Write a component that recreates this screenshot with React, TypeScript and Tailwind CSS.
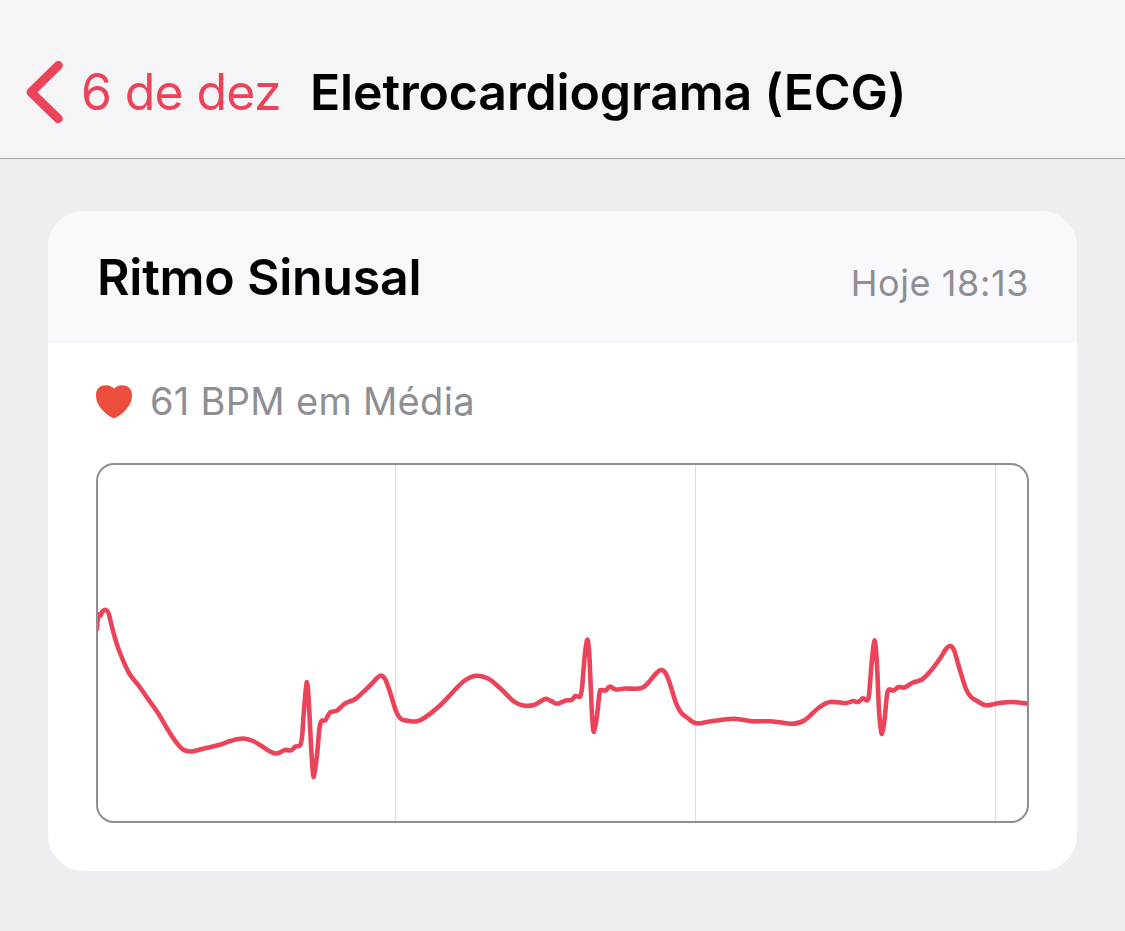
type Point = [number, number];

const GRID_LINES = [395, 695, 995];

const TRACE: Point[] = [
  [97, 629], [97.5, 621], [98.5, 614.5], [100.5, 615.5], [102.5, 611.5], [106, 610], [108.5, 613],
  [111, 623], [115, 638], [120, 653], [129, 673], [139, 686], [148, 699], [158, 713],
  [168, 730], [176, 742], [183, 749.5], [191, 751.5], [204, 748.5], [219, 745], [232, 740.5], [243, 738.5],
  [253, 741], [263, 747], [271, 752], [277, 753.5], [285, 750], [291, 750.3], [295.5, 746.5], [300, 745.5], [302, 737], [304, 710], [306.3, 685], [307.5, 685],
  [309, 705], [311, 745], [313, 774], [314.3, 774], [317, 755], [319.5, 728], [321.5, 721], [325.5, 720], [330, 712.5], [337, 710.5], [345, 703.5], [356, 698.5],
  [369, 686.5], [377, 678], [381, 675.5], [385, 679], [389, 689], [396, 711], [401, 719], [408, 720.8], [417, 721.3],
  [425, 717.5], [440, 705.5], [452, 693], [464, 681], [476, 675.8], [488, 678.5], [501, 689], [514, 701.5], [523, 705.5],
  [534, 705], [545, 699], [551, 701], [557, 703.7], [566, 700.5], [571.5, 700], [575.5, 696], [580, 696.5], [582, 688], [584.5, 658], [586.7, 641.5], [588, 641.5],
  [589.5, 658], [591.5, 705], [593.2, 729.5], [594.5, 729.5], [597, 716], [599.5, 693], [601.5, 690], [605.5, 690.5], [610, 686.5], [616, 689.5], [625, 688.5],
  [641, 688.3], [648, 683], [656, 673.5], [661, 670], [665.5, 673], [670, 684], [676, 703], [681, 712.5], [687, 717.5],
  [696, 723.3], [711, 721.3], [733, 718.8], [752, 721.3], [771, 721.3], [793, 723.7], [805, 720], [819, 707.5], [830, 702],
  [846, 703], [853, 701], [858, 702], [863, 698.3], [867, 700.5], [869, 695], [871.5, 665], [873.9, 643], [875.2, 643], [877, 665],
  [879, 710], [881.2, 731.8], [882.5, 731.8], [884.5, 720], [887, 695], [889, 689.5], [893.5, 690.5], [898.5, 687], [904.5, 687.5], [913, 682.5], [922, 679.5],
  [931, 670.5], [940, 658.5], [946, 649], [950, 646], [954, 650], [959, 667], [966, 689], [971, 697], [978, 701.5],
  [986, 705.3], [999, 703], [1013, 702], [1030, 704],
];

// Catmull-Rom spline through every sample, written as cubic beziers
function smoothPath(points: Point[]) {
  let d = `M${points[0][0]} ${points[0][1]}`;
  for (let i = 0; i < points.length - 1; i++) {
    const p0 = points[Math.max(i - 1, 0)];
    const p1 = points[i];
    const p2 = points[i + 1];
    const p3 = points[Math.min(i + 2, points.length - 1)];
    // keep handles inside the segment so sharp spikes don't loop back
    const clamp = (v: number, a: number, b: number) => Math.min(Math.max(v, Math.min(a, b)), Math.max(a, b));
    const c1x = clamp(p1[0] + (p2[0] - p0[0]) / 6, p1[0], p2[0]);
    const c2x = clamp(p2[0] - (p3[0] - p1[0]) / 6, p1[0], p2[0]);
    const c1y = p1[1] + (p2[1] - p0[1]) / 6;
    const c2y = p2[1] - (p3[1] - p1[1]) / 6;
    d += `C${c1x} ${c1y} ${c2x} ${c2y} ${p2[0]} ${p2[1]}`;
  }
  return d;
}

function EcgChart() {
  return (
    <div className="mt-[38px] h-[360px] overflow-hidden rounded-[18px] border-2 border-[#8e8e93]">
      <svg viewBox="98 465 929 356" className="block h-full w-full" fill="none">
        {GRID_LINES.map((x) => (
          <line key={x} x1={x + 0.5} x2={x + 0.5} y1={465} y2={821} stroke="#dcdcdd" />
        ))}
        <path d={smoothPath(TRACE)} stroke="#eb445a" strokeWidth={4.6} strokeLinecap="round" strokeLinejoin="round" />
      </svg>
    </div>
  );
}

export default function App() {
  return (
    <div className="h-[931px] w-[1125px] overflow-hidden bg-[#eeedf2] font-['Inter',sans-serif]">
      <header className="flex h-[159px] items-center border-b border-[#a7a7aa] bg-[#f5f5f7] pt-[26px] pl-[25px] whitespace-nowrap">
        <button className="flex items-center text-[#eb445a]">
          <svg width="40" height="66" viewBox="0 0 40 66" fill="none" className="shrink-0">
            <path d="M33.3 6.5 6 33.2l27.300 26.500" stroke="currentColor" strokeWidth="9" strokeLinecap="round" strokeLinejoin="round" />
          </svg>
          <span className="ml-[16px] w-[198px] text-left text-[50px] leading-[60px] tracking-[-0.7px]">6 de dez</span>
        </button>
        <h1 className="ml-[31px] text-[50px] leading-[60px] font-semibold tracking-[-0.15px] text-black">Eletrocardiograma (ECG)</h1>
      </header>

      <main className="px-12 pt-[52px]">
        <section className="h-[660px] overflow-hidden rounded-[36px] bg-white">
          <div className="flex h-[132px] items-center justify-between bg-[#f9f8fd] px-12">
            <h2 className="ml-px text-[50px] leading-[60px] font-semibold tracking-[-0.25px] text-black">Ritmo Sinusal</h2>
            <span className="mt-3 text-[36px] leading-[44px] tracking-[0.6px] text-[#8e8e93]">Hoje 18:13</span>
          </div>
          <div className="px-12 pt-[35px]">
            <div className="flex h-[47px] items-center text-[#8e8e93]">
              <svg width="36" height="34" viewBox="0 0 36 34" className="shrink-0">
                <path
                  d="M18 33.3C15.500 32.800 9.500 28.800 5.500 24C1.700 19.500 0 15.500 0 10.200C0 4 3.800.2 9.500.2C13.500.2 16 1.700 18 3.500C20 1.700 22.500.2 26.500.2C32.200.2 36 4 36 10.200C36 15.500 34.300 19.500 30.500 24C26.500 28.800 20.500 32.800 18 33.300Z"
                  fill="#eb4e3d"
                />
              </svg>
              <span className="ml-[18px] text-[38px] leading-[47px] tracking-[0.3px]">61 BPM em Média</span>
            </div>
            <EcgChart />
          </div>
        </section>
      </main>
    </div>
  );
}
